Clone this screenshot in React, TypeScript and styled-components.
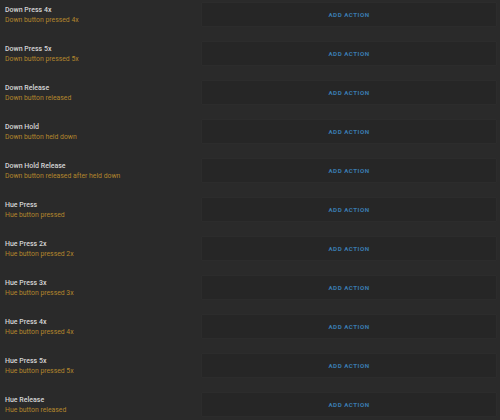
import React from "react";
import styled, { createGlobalStyle } from "styled-components";

const Global = createGlobalStyle`
  html, body { margin: 0; padding: 0; background: #2a2a2a; }
  body { font-family: Roboto, "Liberation Sans", sans-serif; }
`;

const List = styled.div`
  width: 500px;
  height: 420px;
  overflow: hidden;
  background: #2a2a2a;
  display: flex;
  flex-direction: column;
`;

const Row = styled.div`
  display: grid;
  grid-template-columns: 202px 294px;
  height: 39px;
  flex: none;
`;

const Info = styled.div`
  padding: 6px 0 0 5px;
  display: flex;
  flex-direction: column;
  gap: 1px;
`;

const Title = styled.div`
  color: #d6d6d6;
  font-size: 7px;
  font-weight: 500;
  line-height: 9px;
`;

const Sub = styled.div`
  color: #b3862d;
  font-size: 6.85px;
  line-height: 9px;
`;

const Panel = styled.div`
  margin-top: 3px;
  height: 23px;
  background: #262626;
  box-shadow: 0 0 0 0.5px #2e2e2e;
  display: flex;
  align-items: center;
  justify-content: center;
`;

const AddButton = styled.button`
  background: none;
  border: none;
  padding: 0;
  color: #3a7cb0;
  font-family: Roboto, "Liberation Sans", sans-serif;
  font-size: 6.2px;
  font-weight: 700;
  letter-spacing: 0.5px;
  text-transform: uppercase;
`;

const rows: [string, string][] = [
  ["Down Press 4x", "Down button pressed 4x"],
  ["Down Press 5x", "Down button pressed 5x"],
  ["Down Release", "Down button released"],
  ["Down Hold", "Down button held down"],
  ["Down Hold Release", "Down button released after held down"],
  ["Hue Press", "Hue button pressed"],
  ["Hue Press 2x", "Hue button pressed 2x"],
  ["Hue Press 3x", "Hue button pressed 3x"],
  ["Hue Press 4x", "Hue button pressed 4x"],
  ["Hue Press 5x", "Hue button pressed 5x"],
  ["Hue Release", "Hue button released"],
];

export default function App() {
  return (
    <>
      <Global />
      <List>
        {rows.map(([t, s]) => (
          <Row key={t}>
            <Info>
              <Title>{t}</Title>
              <Sub>{s}</Sub>
            </Info>
            <Panel>
              <AddButton>Add action</AddButton>
            </Panel>
          </Row>
        ))}
      </List>
    </>
  );
}
